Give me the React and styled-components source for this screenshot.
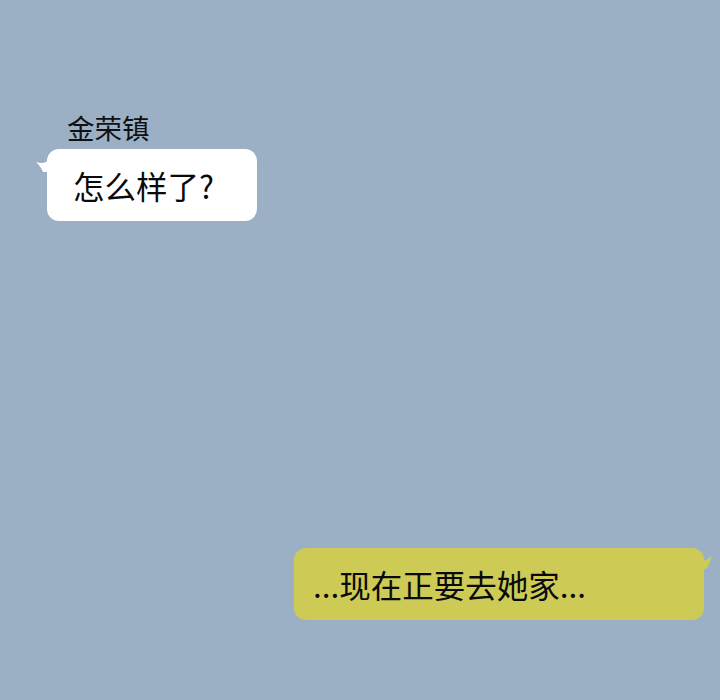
import styled, { createGlobalStyle } from 'styled-components';

const GlobalStyle = createGlobalStyle`
  body {
    margin: 0;
    background: #9cb0c5;
    font-family: "Noto Sans CJK SC", "Noto Sans", sans-serif;
  }
`;

function Tail({ side }) {
  if (side === 'left') {
    return (
      <TailMark side={side} width="16" height="16" viewBox="0 0 16 16">
        <path d="M14 2 C10 6 6 7 0 5 C4 9 6 12 7 15 L14 15 Z" fill="#ffffff" />
      </TailMark>
    );
  }
  return (
    <TailMark side={side} width="16" height="18" viewBox="0 0 16 18">
      <path d="M0 4 C4 6 8 4 13 0 C11 5 10 9 8 12 L0 16 Z" fill="#cdcb55" />
    </TailMark>
  );
}

function App() {
  return (
    <Page>
      <GlobalStyle />
      <Incoming>
        <SenderName>金荣镇</SenderName>
        <Bubble tone="white">
          <Tail side="left" />
          <BubbleText>怎么样了?</BubbleText>
        </Bubble>
      </Incoming>

      <Outgoing>
        <Bubble tone="yellow" wide>
          <BubbleText>...现在正要去她家...</BubbleText>
          <Tail side="right" />
        </Bubble>
      </Outgoing>
    </Page>
  );
}

export default App;

const Page = styled.div`
  width: 720px;
  height: 700px;
  background: #9cb0c5;
  display: flex;
  flex-direction: column;
  justify-content: space-between;
  padding: 109px 16px 80px 47px;
  box-sizing: border-box;
`;

const Incoming = styled.div`
  display: flex;
  flex-direction: column;
  align-items: flex-start;
  gap: 4px;
`;

const SenderName = styled.div`
  margin-left: 20px;
  font-size: 27.5px;
  line-height: 36px;
  color: #111111;
`;

const Outgoing = styled.div`
  display: flex;
  justify-content: flex-end;
`;

const Bubble = styled.div`
  position: relative;
  display: flex;
  align-items: center;
  box-sizing: border-box;
  height: 72px;
  width: ${({ wide }) => (wide ? '410px' : '210px')};
  padding-left: ${({ wide }) => (wide ? '19px' : '26px')};
  border-radius: 12px;
  background: ${({ tone }) => (tone === 'yellow' ? '#cdcb55' : '#ffffff')};
`;

const BubbleText = styled.span`
  font-size: 31.5px;
  line-height: 38px;
  color: #0a0a0a;
  white-space: nowrap;
`;

const TailMark = styled.svg`
  position: absolute;
  top: 8px;
  ${({ side }) => (side === 'left' ? 'left: -11px;' : 'right: -11px;')}
`;
